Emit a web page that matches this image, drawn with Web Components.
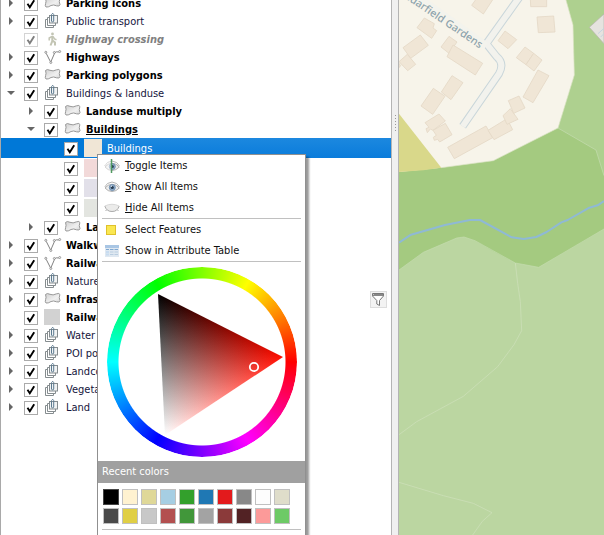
<!DOCTYPE html>
<html lang="en">
<head>
<meta charset="utf-8">
<title>Layers</title>
<style>
html, body { height: 100%; margin: 0; }
body { background: #fff; font: 11px/18px "DejaVu Sans Condensed", "DejaVu Sans", sans-serif; font-stretch: condensed; color: #000; overflow: hidden; }
</style>
</head>
<body>
<gis-window>
  <layer-tree slot="tree">
    <layer-row kind="polygon" strong>Parking icons</layer-row>
    <layer-row kind="group">Public transport</layer-row>
    <layer-row kind="walker" leaf muted>Highway crossing</layer-row>
    <layer-row kind="line" strong>Highways</layer-row>
    <layer-row kind="polygon" strong>Parking polygons</layer-row>
    <layer-row kind="group" open>Buildings &amp; landuse</layer-row>
    <layer-row kind="polygon" level="1" strong>Landuse multiply</layer-row>
    <layer-row kind="polygon" level="1" strong open><u>Buildings</u></layer-row>
    <layer-row kind="swatch" color="#f0e6d6" level="2" leaf tall selected>Buildings</layer-row>
    <layer-row kind="swatch" color="#f2d9d9" level="2" leaf tall></layer-row>
    <layer-row kind="swatch" color="#e2e0e9" level="2" leaf tall></layer-row>
    <layer-row kind="swatch" color="#e3e5e0" level="2" leaf tall></layer-row>
    <layer-row kind="polygon" level="1" strong>Lakes</layer-row>
    <layer-row kind="line" strong>Walkways</layer-row>
    <layer-row kind="line" strong>Railways</layer-row>
    <layer-row kind="group">Nature</layer-row>
    <layer-row kind="polygon" strong filter>Infrastructure</layer-row>
    <layer-row kind="swatch" color="#d2d2d2" leaf strong>Railway</layer-row>
    <layer-row kind="group">Water</layer-row>
    <layer-row kind="group">POI points</layer-row>
    <layer-row kind="group">Landcover</layer-row>
    <layer-row kind="group">Vegetation</layer-row>
    <layer-row kind="group">Land</layer-row>
  </layer-tree>
  <map-canvas slot="map"></map-canvas>
  <context-menu slot="menu">
    <menu-item icon="toggle"><u>T</u>oggle Items</menu-item>
    <menu-item icon="show"><u>S</u>how All Items</menu-item>
    <menu-item icon="hide"><u>H</u>ide All Items</menu-item>
    <menu-rule></menu-rule>
    <menu-item icon="select">Select Features</menu-item>
    <menu-item icon="table">Show in Attribute Table</menu-item>
    <menu-rule></menu-rule>
    <color-wheel></color-wheel>
    <recent-colors colors="#000000 #fff2d0 #dfd898 #a6cee3 #33a02c #1f78b4 #e31a1c #888888 #fdfdfd #dfddca #4a4a4a #e0cf45 #c8c8c8 #b35050 #41973a #a3a3a3 #8b3a3a #522224 #fc9a99 #6dca66">Recent colors</recent-colors>
    <menu-rule></menu-rule>
  </context-menu>
</gis-window>

<script>
const define = (name, html, setup) => {
  const template = document.createElement('template');
  template.innerHTML = html;
  customElements.define(name, class extends HTMLElement {
    constructor() {
      super();
      this.attachShadow({ mode: 'open' }).append(template.content.cloneNode(true));
    }
    connectedCallback() { if (setup) setup(this, this.shadowRoot); }
  });
};

define('gis-window', `
<style>
:host { display: grid; position: relative; height: 100vh; overflow: hidden; grid-template-columns: minmax(0, 391fr) 8px minmax(0, 205fr); }
.tree { border-left: 1px solid #a9a9a9; overflow: hidden; }
.split { background: #f0f0f0; border: solid #b4b4b4; border-width: 0 1px; display: grid; justify-items: center; align-content: start; padding-top: 115px; }
.grip { width: 1px; height: 17px; background: repeating-linear-gradient(#999 0 1px, transparent 1px 3px); }
.map { min-width: 0; height: 100vh; }
.menu { position: absolute; left: 97px; top: 154px; }
</style>
<div class="tree"><slot name="tree"></slot></div>
<div class="split"><div class="grip"></div></div>
<div class="map"><slot name="map"></slot></div>
<div class="menu"><slot name="menu"></slot></div>`);

define('layer-tree', `
<style>:host { display: flex; flex-direction: column; margin-top: -6px; }</style>
<slot></slot>`);

const layerIcons = {
  polygon: `<svg width="18" height="18" viewBox="0 0 18 18"><defs><linearGradient id="g" x2="1" y2="1"><stop offset="0" stop-color="#cfcfcf"/><stop offset=".6" stop-color="#f0f0f0"/><stop offset="1" stop-color="#d4d4d4"/></linearGradient></defs><path d="M1.500 4.500Q3 2.700 6 4.300Q9 5.700 12.500 3.800Q15.500 2.800 15.900 4.500Q14.600 7.500 16 10.700Q15.500 12.800 12.500 11.800Q9.500 10.300 7 11.500Q4 13.500 2 13Q.800 12 1.600 9.500Q2.600 7.500 1.500 4.500Z" fill="url(#g)" stroke="#999"/></svg>`,
  line: `<svg width="18" height="18" viewBox="0 0 18 18" fill="none" stroke="#828282"><path d="M2.200 5.300L6.700 14.200L10.800 4.700Q12 3.300 14.800 4"/><circle cx="1.800" cy="4.300" r="1" fill="#fff" stroke-width=".8"/><circle cx="6.800" cy="14.500" r="1" fill="#fff" stroke-width=".8"/><circle cx="10.300" cy="4.500" r="1" fill="#fff" stroke-width=".8"/><circle cx="15.700" cy="3.500" r="1" fill="#fff" stroke-width=".8"/></svg>`,
  group: `<svg width="18" height="18" viewBox="0 0 18 18" fill="none" stroke="#858c8f"><path d="M3.500 7.500H1.500V15.500H9.500V13.500"/><path d="M6 5.500H3.500V13.500H11.500V11"/><rect x="5.500" y="3.500" width="8" height="7.500" fill="#f1f3f4"/><path d="M7.500 4V9Q8.500 11.500 9.700 9V2.500Q8.700 0 7.600 2.500V4" stroke="#5c7a90"/></svg>`,
  walker: `<svg width="18" height="18" viewBox="0 0 18 18" fill="none" stroke="#c3c5b4" stroke-width="1.500"><circle cx="8.500" cy="4" r="1.400" fill="#c3c5b4" stroke="none"/><path d="M8.300 6V11L6.500 15.500M8.500 10.500L11 12.500V15.500" stroke-width="2"/><path d="M8 6.500L5.200 8V10.500M9 6.500L10.500 9L12.500 9.700"/></svg>`
};

define('layer-row', `
<style>
:host { display: flex; align-items: center; height: 18px; flex: none; padding-left: 4px; white-space: nowrap; }
:host([level="1"]) { padding-left: 24px; }
:host([level="2"]) { padding-left: 44px; }
:host([tall]) { height: 20px; }
:host([strong]) { font-weight: bold; }
:host([muted]) { font-weight: bold; font-style: italic; color: #808080; }
:host([kind="group"]) { color: #15153c; }
:host([selected]) { color: #fff; background: linear-gradient(90deg, #0078d7 0 83px, transparent 83px), linear-gradient(#1c88df, #0a7cdb); }
button { appearance: none; border: 0; padding: 0; background: none; width: 12px; height: 18px; margin-right: 7px; display: grid; place-items: center; }
:host([leaf]) .arrow { visibility: hidden; }
.box { display: grid; margin-right: 6px; margin-top: 1px; }
.box > * { grid-area: 1 / 1; }
input { appearance: none; margin: 0; width: 14px; height: 14px; background: #fff; border: 1px solid #aaa; }
.box svg { pointer-events: none; }
:host([muted]) .box { opacity: .5; }
.icon { display: grid; width: 18px; margin-right: 4px; }
:host([level="2"]) .icon { margin-right: 5px; }
.chip { width: 16px; height: 16px; }
:host([tall]) .chip { width: 18px; height: 18px; }
label { padding-top: 2px; }
.filter { margin: 0 4px 0 auto; width: 17px; height: 17px; background: #f3f3f3; border: 1px solid #ddd; }
</style>
<button class="arrow" aria-label="Expand"></button>
<span class="box"><input id="c" type="checkbox" checked><svg width="14" height="14" viewBox="0 0 14 14"><path d="M3.500 6.800L5.800 10.300L10.200 3.300" fill="none" stroke="#000" stroke-width="1.900"/></svg></span>
<span class="icon"></span>
<label for="c"><slot></slot></label>`, (host, root) => {
  const has = n => host.hasAttribute(n);
  root.querySelector('.arrow').innerHTML = `<svg width="10" height="10" viewBox="0 0 10 10"><path d="${has('open') ? 'M1 3H9L5 7Z' : 'M3 1V9L7 5Z'}" fill="#666"/></svg>`;
  const icon = root.querySelector('.icon');
  const kind = host.getAttribute('kind');
  if (kind === 'swatch') {
    icon.innerHTML = '<span class="chip"></span>';
    icon.firstChild.style.background = host.getAttribute('color');
  } else icon.innerHTML = layerIcons[kind];
  if (!host.textContent) root.querySelector('input').setAttribute('aria-label', 'Class');
  if (has('filter')) root.querySelector('label').insertAdjacentHTML('afterend', `<button class="filter" aria-label="Filter"><svg width="15" height="15" viewBox="0 0 15 15"><path d="M1.500 1.500H12.500V4L8.500 8.500V13.500L5.800 12V8.500L1.500 4Z" fill="#fff" stroke="#777"/><path d="M1.500 3.500H12.500M2.500 2.500H12" stroke="#888"/></svg></button>`);
});

define('context-menu', `
<style>:host { display: flex; flex-direction: column; box-sizing: border-box; width: 209px; height: 400px; background: #fff; border: 1px solid #909090; box-shadow: 3px 3px 2px rgba(0,0,0,.4); }</style>
<slot></slot>`);

define('menu-rule', `
<style>:host { display: block; flex: none; height: 1px; margin: 0 4px; background: #c0c0c0; } :host(:last-child) { margin-top: 5px; }</style>`);

const eye = `<path d="M.800 8Q2.500 3.500 8 3Q13.500 3.500 15.500 8" stroke="#b5b5b5"/><path d="M1 9Q4 5.300 8 5.300Q12.500 5.300 15.300 9Q12 12.500 8 12.500Q4 12.500 1 9Z" fill="#eee" stroke="#b0b0b0"/><circle cx="8.300" cy="8.500" r="3" fill="#8eabc8" stroke="#6f8fb0"/><circle cx="8.300" cy="8.500" r="1.600" fill="#263b52"/><path d="M7 7.200H8" stroke="#fff"/>`;
const menuIcons = {
  show: eye,
  toggle: eye + '<path d="M7 2V15L1 11V5Z" fill="#fff" opacity=".45"/><path d="M7.500 1V15" stroke="#509a60" stroke-width="1.500"/>',
  hide: '<path d="M.800 6Q8 2.500 15.200 6Q13.500 12 8 12Q2.500 12 .800 6Z" fill="#ebebea"/><path d="M.800 6Q2.500 11.500 8 11.500Q13.500 11.500 15.200 6M2.500 10L1.500 11M13.500 10L14.500 11" stroke="#ababab"/><path d="M.800 6Q8 2.500 15.200 6" stroke="#d8d8d8"/>',
  select: '<rect x="2.500" y="3.500" width="9" height="9" fill="#fae751" stroke="#dfc12b"/>',
  table: '<rect x="1" y="2" width="14" height="12" fill="#dfe8f1"/><path d="M1 3.500H15" stroke="#a9c6e4" stroke-width="3"/><path d="M2 6.500H5M6 6.500H9.500M10.500 6.500H14" stroke="#7fa8d2"/><path d="M6 9H9.500M10.500 9H14M6 11.500H9.500M10.500 11.500H14" stroke="#b9cde0"/><path d="M2 9H5M2 11.500H5" stroke="#c8dcf0" stroke-width="2"/>'
};
define('menu-item', `
<style>
:host { display: block; flex: none; }
button { appearance: none; display: flex; align-items: center; gap: 5px; width: 100%; height: 21px; padding: 0 0 0 6px; border: 0; background: none; font: inherit; color: #101010; text-align: left; white-space: nowrap; }
svg { flex: none; }
</style>
<button><svg width="16" height="16" viewBox="0 0 16 16" fill="none"></svg><span><slot></slot></span></button>`, (host, root) => {
  root.querySelector('svg').innerHTML = menuIcons[host.getAttribute('icon')];
});

define('color-wheel', `
<style>
:host { display: grid; flex: none; justify-content: center; padding: 5px 0 4px; }
.ring, svg { grid-area: 1 / 1; }
.ring { width: 190px; height: 190px; border-radius: 50%; background: conic-gradient(from 90deg, #f00, #f0f, #00f, #0ff, #0f0, #ff0, #f00); -webkit-mask: radial-gradient(circle, transparent 83px, #000 84px); mask: radial-gradient(circle, transparent 83px, #000 84px); }
.add { mix-blend-mode: plus-lighter; }
.iso { isolation: isolate; }
</style>
<div class="ring"></div>
<svg width="190" height="190" viewBox="0 0 190 190" role="img" aria-label="Color wheel">
<defs>
<linearGradient id="r" gradientUnits="userSpaceOnUse" x1="54.400" y1="96" x2="176" y2="90"><stop stop-color="#000"/><stop offset="1" stop-color="#ff0d00"/></linearGradient>
<linearGradient id="w" gradientUnits="userSpaceOnUse" x1="113.300" y1="58.400" x2="58" y2="168"><stop stop-color="#000"/><stop offset="1" stop-color="#fff"/></linearGradient>
<clipPath id="t"><path d="M51 27L176 90L58 168Z"/></clipPath>
</defs>
<g clip-path="url(#t)"><g class="iso"><rect width="190" height="190" fill="url(#r)"/><rect class="add" width="190" height="190" fill="url(#w)"/></g></g>
<path d="M178 90.500L190 90" stroke="#fff" stroke-width="2"/>
<circle cx="147" cy="100" r="4.200" fill="none" stroke="#fff" stroke-width="1.800"/>
</svg>`);

define('recent-colors', `
<style>
:host { display: block; flex: none; }
h2 { margin: 0; padding: 2px 4px; background: #a0a0a0; color: #fff; font: inherit; }
.grid { display: grid; grid-template-columns: repeat(10, 16px); gap: 3px; padding: 6px 5px 0; }
button { appearance: none; width: 16px; height: 16px; padding: 0; border: 1px solid #c0c0c0; }
button:first-child { border-color: #444; }
</style>
<h2><slot></slot></h2><div class="grid"></div>`, (host, root) => {
  for (const c of host.getAttribute('colors').split(' ')) {
    const b = document.createElement('button');
    b.style.backgroundColor = c;
    b.setAttribute('aria-label', c);
    root.querySelector('.grid').append(b);
  }
});

define('map-canvas', `
<style>:host { display: block; height: 100%; } svg { display: block; width: 100%; height: 100%; }</style>
<svg viewBox="117 0 615 1605" preserveAspectRatio="xMinYMin slice">
<rect x="117" width="1200" height="1605" fill="#bbd6a1"/>
<path d="M117 0H732V687L660 730L536 802L466 789L400 754L345 722L312 711L290 714L190 757L117 810Z" fill="#a4ca80"/>
<path d="M594 384L640 200L610 0H732V527L708 450Z" fill="#aed08f"/>
<path d="M594 384L708 450L732 527" fill="none" stroke="#bdd8a4" stroke-width="3"/>
<path d="M117 810L190 757L290 714L312 711L345 722L466 789L536 802L732 687" fill="none" stroke="#c6dcb0" stroke-width="2"/>
<path d="M117 0H618L639 75L643 225L594 384L400 482L244 503L117 516Z" fill="#f7f4ea"/>
<path d="M618 0L639 75L643 225L594 384L400 482L244 503" fill="none" stroke="#d9e2c3" stroke-width="2"/>
<path d="M117 341L244 503L190 511L117 516Z" fill="#d9d88a"/>
<path d="M688 82L732 42V131Z" fill="#e5e3df" stroke="#b7b3ae" stroke-width="2"/><path d="M714 101L732 85M722 111L732 101" stroke="#c5d3df" stroke-width="3"/>
<g fill="none" stroke-linejoin="round">
<path d="M478 -8L379 131L410 170Q434 190 417 221L308 379" stroke="#c9d6da" stroke-width="24"/>
<path d="M478 -8L379 131L410 170Q434 190 417 221L308 379" stroke="#f2f2ed" stroke-width="18"/>
<path d="M130 -40L379 138" stroke="#f3f3ed" stroke-width="22"/>
<path d="M117 728L153 704L255 675L330 660H360L455 712L491 717L529 711L560 696L604 667L623 660L688 623L713 616L732 603" stroke="#8fb9d5" stroke-width="6"/>
<path d="M466 789L473 850L481 905L485 992L462 1034L413 1100L310 1189L170 1265L117 1304M117 1447L250 1487L340 1510L396 1538L367 1564L338 1605" stroke="#cbdfb7" stroke-width="2.500"/>
</g>
<g fill="#f0e6d6" stroke="#e4d9c7" stroke-width="2.500">
<path d="M335 16L352 -8H403L370 42Z"/><path d="M511 -5H560V20H512Z"/><path d="M531 51L581 48L585 96L535 98Z"/>
<path d="M193 54L223 71L219 84L230 92L215 115L171 83Z"/><path d="M129 143L181 105L205 136L152 175Z"/><path d="M117 185L142 163L167 193L143 212Z"/><path d="M117 190L122 197L117 203Z"/>
<path d="M267 109L291 126L267 160L243 141Z"/><path d="M279 135L368 190L346 225L261 170Z"/>
<path d="M435 93L470 119L444 146L414 122Z"/><path d="M495 141L521 160L498 194L469 173Z"/><path d="M521 160L546 180L522 213L498 194Z"/>
<path d="M534 210L567 227L519 308L489 291Z"/><path d="M276 227L309 248L273 299L244 276Z"/><path d="M220 265L255 289L218 343L183 318Z"/>
<path d="M237 342L256 363L219 391L211 387L202 398L198 386L207 382L195 368Z"/><path d="M256 370L276 404L239 426L233 418L223 421L220 412L229 406L219 391Z"/>
<path d="M378 378L398 413L283 476L263 442Z"/><path d="M384 391L441 356L458 389L402 419Z"/><path d="M451 326L474 358L441 373L429 347Z"/><path d="M445 302L477 288L495 324L461 340Z"/>
</g>
<text transform="translate(359 146) rotate(34)" text-anchor="end" font-family="Noto Sans, sans-serif" font-size="32" font-weight="500" fill="#8da3ad" stroke="#f7f4ea" stroke-width="5" paint-order="stroke">Cedarfield Gardens</text>
</svg>`);
</script>
</body>
</html>
